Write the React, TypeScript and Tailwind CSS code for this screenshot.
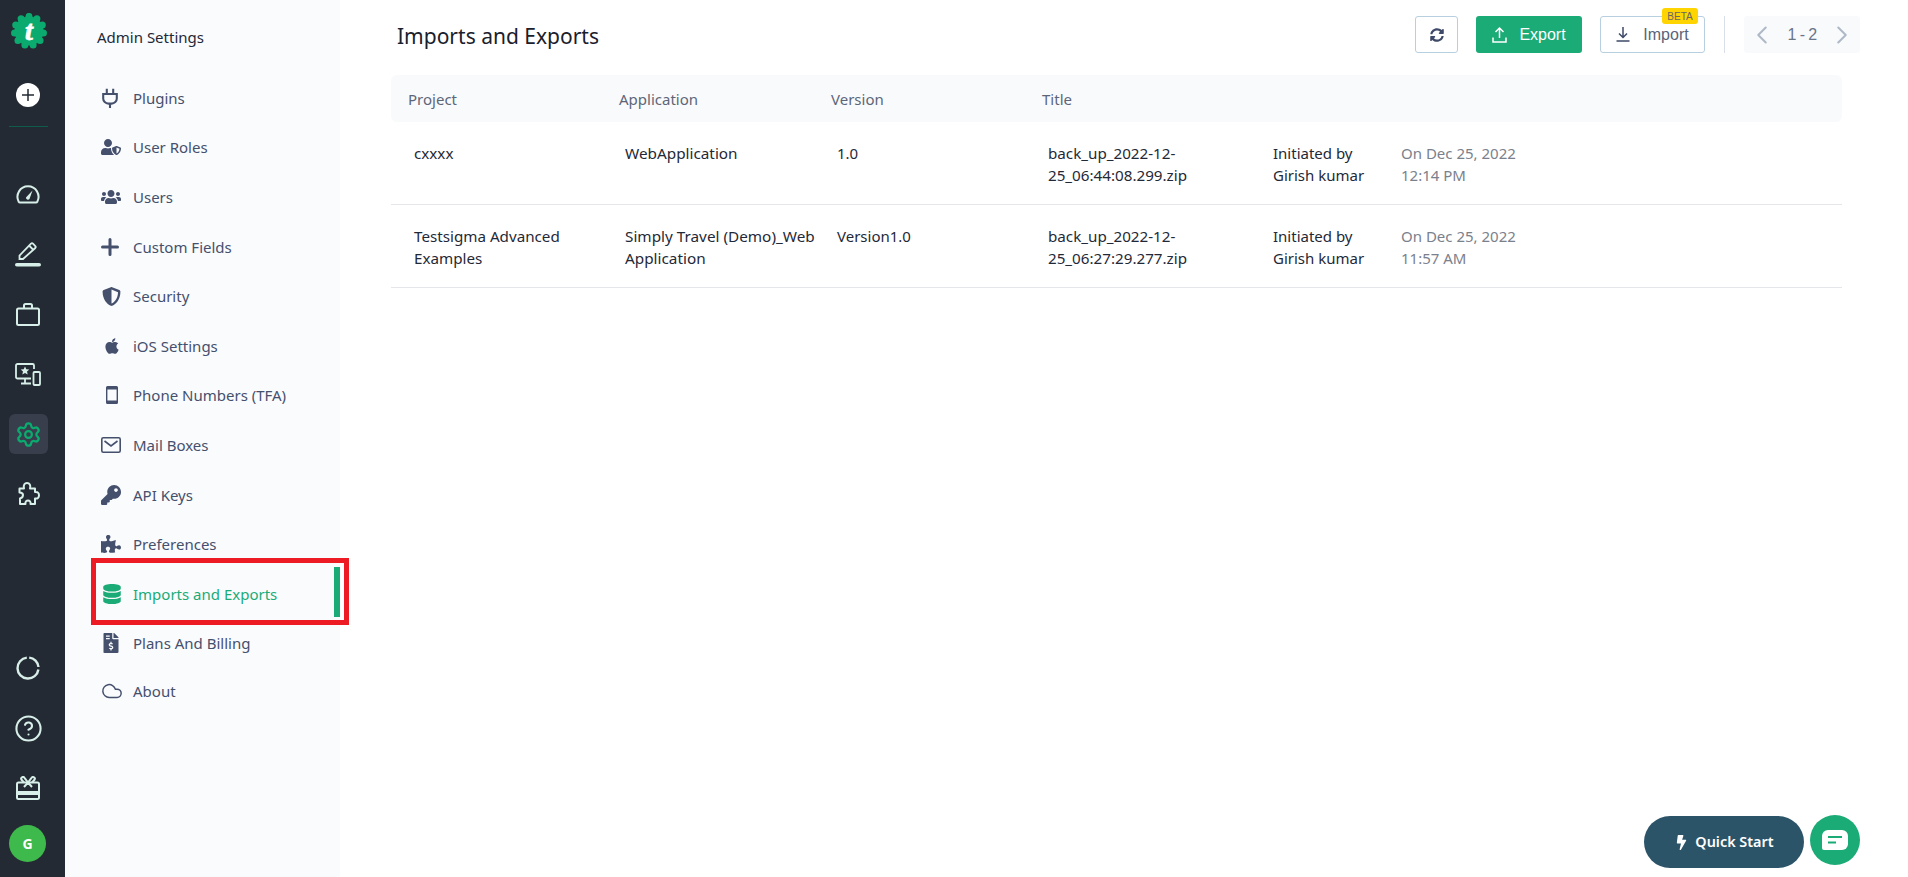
import React from 'react';
import { Settings, CircleHelp, ChevronLeft, ChevronRight, Cloud } from 'lucide-react';
import { FaUserShield, FaUsers, FaShieldAlt, FaApple, FaKey, FaPuzzlePiece, FaDatabase, FaFileInvoiceDollar, FaSyncAlt, FaBolt } from 'react-icons/fa';

function Logo() {
    const dots = Array.from({ length: 11 }, (_, i) => (i * 360) / 11 - 90);
    return (
        <svg width="36" height="36" viewBox="0 0 36 36">
            <circle cx="18" cy="18" r="14.5" fill="#0bab6f" />
            {dots.map((a) => (
                <circle key={a} cx={18 + 14.6 * Math.cos((a * Math.PI) / 180)} cy={18 + 14.6 * Math.sin((a * Math.PI) / 180)} r="3.5" fill="#0bab6f" />
            ))}
            <text x="18" y="27" textAnchor="middle" fontSize="28" fontWeight="700" fontStyle="italic" fontFamily="Liberation Serif, serif" fill="#fff" stroke="#fff" strokeWidth="0.8">t</text>
        </svg>
    );
}

function PlugIcon() {
    return (
        <svg width="18" height="20" viewBox="2 0 20 25" fill="none" stroke="currentColor" strokeWidth="2.6">
            <path d="M8 1v6M16 1v6M3.500 7.500h17v5.500a6.500 6.500 0 0 1-6.500 6.500h-4A6.500 6.500 0 0 1 3.500 13zM12 19.500V25" />
        </svg>
    );
}

function PlusIcon() {
    return (
        <svg width="18" height="18" viewBox="0 0 18 18" fill="none" stroke="currentColor" strokeWidth="3" strokeLinecap="round">
            <path d="M9 1.500v15M1.500 9h15" />
        </svg>
    );
}

function PhoneIcon() {
    return (
        <svg width="12" height="18" viewBox="0 0 12 18" className="ml-[5px]">
            <path fill="currentColor" fillRule="evenodd" d="M1.500 0h9A1.500 1.500 0 0 1 12 1.500v15a1.500 1.500 0 0 1-1.500 1.500h-9A1.500 1.500 0 0 1 0 16.500v-15A1.500 1.500 0 0 1 1.500 0zM1.400 3.500v11h9.200v-11z" />
        </svg>
    );
}

function MailIcon() {
    return (
        <svg width="20" height="16" viewBox="0 0 20 16" fill="none" stroke="currentColor" strokeWidth="1.600">
            <rect x="0.800" y="0.800" width="18.400" height="14.400" rx="1.500" />
            <path d="M3.500 4l6.500 5 6.500-5" />
        </svg>
    );
}

function GaugeIcon() {
    return (
        <svg width="24" height="20" viewBox="0 0 24 20" fill="none" stroke="currentColor" strokeWidth="2">
            <path d="M4 18.500h16a1.500 1.500 0 0 0 1.300-.8A10.500 10.500 0 1 0 2.700 17.700a1.500 1.500 0 0 0 1.300.8z" />
            <path d="M10 13.500l6.500-7-3 8.500a2 2 0 0 1-3.500-1.500z" fill="currentColor" stroke="none" />
        </svg>
    );
}

function PencilIcon() {
    return (
        <svg width="26" height="26" viewBox="0 0 26 26" fill="none" stroke="currentColor" strokeWidth="1.800">
            <path d="M4.500 18v-3.500L16 2.700a1.500 1.500 0 0 1 2 0l2.300 2.300a1.500 1.500 0 0 1 0 2L8 18z" />
            <path d="M14 4.500l4.500 4.500" />
            <rect x="0" y="22" width="26" height="3.600" rx="1.800" fill="currentColor" stroke="none" />
        </svg>
    );
}

function BriefcaseIcon() {
    return (
        <svg width="24" height="23" viewBox="0 0 24 23" fill="none" stroke="currentColor" strokeWidth="2">
            <rect x="1" y="5.500" width="22" height="16.500" rx="1.500" />
            <path d="M8 5.500V2.500A1.500 1.500 0 0 1 9.500 1h5A1.500 1.500 0 0 1 16 2.500v3" />
        </svg>
    );
}

function DevicesIcon() {
    return (
        <svg width="26" height="23" viewBox="0 0 26 23" fill="none" stroke="currentColor" strokeWidth="1.800">
            <path d="M16 15.500H2.500A1.500 1.500 0 0 1 1 14V2.500A1.500 1.500 0 0 1 2.500 1h15A1.500 1.500 0 0 1 19 2.500V6" />
            <path d="M10 15.500V20M6 20.500h10" />
            <rect x="18.500" y="9" width="6.500" height="13" rx="1" />
            <path d="M10 3.500l1.300 2.800 3 .3-2.300 2 .7 3L10 10.100 7.300 11.600l.7-3-2.300-2 3-.3z" fill="currentColor" stroke="none" />
        </svg>
    );
}

function PuzzleIcon() {
    return (
        <svg width="24" height="24" viewBox="0 0 24 24" fill="none" stroke="currentColor" strokeWidth="2" strokeLinejoin="round">
            <path d="M3.500 6.500L8 6.500C7 2.500 9 1 11 1C13.500 1 15 3 14 6.500L19 6.500L19 10C22.500 9.500 23 12 23 13.500C23 15.500 21.500 17 19 16.500L19 22L14.500 22C15 19.500 13.500 18.500 12 18.500C10.500 18.500 9 19.500 9.500 22L4 22L4 16.500C6 16 7 14.500 7 13C7 11.500 5.500 10.500 3.500 10.500Z" />
        </svg>
    );
}

function LoaderIcon() {
    return (
        <svg width="24" height="24" viewBox="0 0 24 24" fill="none" stroke="currentColor" strokeWidth="2.400">
            <path d="M13.200 1.600A10.500 10.500 0 0 1 22.500 11" />
            <path d="M22.400 13.500A10.500 10.500 0 1 1 10.800 1.600" />
        </svg>
    );
}

function GiftIcon() {
    return (
        <svg width="24" height="24" viewBox="0 0 24 24" fill="none" stroke="currentColor" strokeWidth="2">
            <rect x="1" y="6.500" width="22" height="16.500" rx="1.500" />
            <path d="M12 6.500L8.500 1.800a1.800 1.800 0 0 0-3 2L8 6.500M12 6.500l3.500-4.700a1.800 1.800 0 0 1 3 2L16 6.500M12 6.500L8 11M12 6.500l4 4.500" />
            <rect x="1" y="15" width="22" height="4" fill="currentColor" stroke="none" />
        </svg>
    );
}

function UploadIcon() {
    return (
        <svg width="15" height="16" viewBox="0 0 15 16" fill="none" stroke="currentColor" strokeWidth="1.500">
            <path d="M7.500 11V1.500M3.500 5l4-4 4 4M1 10.500v4.500h13v-4.500" />
        </svg>
    );
}

function DownloadIcon() {
    return (
        <svg width="14" height="15" viewBox="0 0 14 15" fill="none" stroke="currentColor" strokeWidth="1.500">
            <path d="M7 0v10M3 6.500l4 4 4-4M0.500 14h13" />
        </svg>
    );
}

function ChatIcon() {
    return (
        <svg width="26" height="21" viewBox="0 0 26 21">
            <path fill="#fff" d="M6 0h14a6 6 0 0 1 6 6v8a6 6 0 0 1-6 6H2a2 2 0 0 1-2-2V6a6 6 0 0 1 6-6z" />
            <path d="M6 7h14M6 12.500h8" stroke="#1bab76" strokeWidth="2" />
        </svg>
    );
}

const menu = [
    { label: 'Plugins', icon: <PlugIcon /> },
    { label: 'User Roles', icon: <FaUserShield size={20} /> },
    { label: 'Users', icon: <FaUsers size={20} /> },
    { label: 'Custom Fields', icon: <PlusIcon /> },
    { label: 'Security', icon: <FaShieldAlt size={19} className="ml-[1px]" /> },
    { label: 'iOS Settings', icon: <FaApple size={18} className="ml-[2px]" /> },
    { label: 'Phone Numbers (TFA)', icon: <PhoneIcon /> },
    { label: 'Mail Boxes', icon: <MailIcon /> },
    { label: 'API Keys', icon: <FaKey size={20} /> },
    { label: 'Preferences', icon: <FaPuzzlePiece size={20} /> },
    { label: 'Imports and Exports', icon: <FaDatabase size={20} className="ml-[1px]" />, active: true },
    { label: 'Plans And Billing', icon: <FaFileInvoiceDollar size={20} /> },
    { label: 'About', icon: <Cloud size={22} strokeWidth={1.600} />, last: true },
];

const rows = [
    { project: 'cxxxx', app: 'WebApplication', version: '1.0', file: 'back_up_2022-12-25_06:44:08.299.zip', time: '12:14 PM' },
    { project: 'Testsigma Advanced Examples', app: 'Simply Travel (Demo)_Web Application', version: 'Version1.0', file: 'back_up_2022-12-25_06:27:29.277.zip', time: '11:57 AM' },
];

function App() {
    return (
        <div className="relative flex h-[877px] w-full overflow-hidden bg-white font-['Noto_Sans',sans-serif] text-[15px]">
            <aside className="flex w-[65px] shrink-0 flex-col items-center bg-[#242a33] pr-[9px] text-[#d7efe8]">
                <div className="ml-[2px] mt-[13px]"><Logo /></div>
                <div className="mt-[34px] flex h-[24px] w-[24px] items-center justify-center rounded-full bg-white">
                    <svg width="12" height="12" viewBox="0 0 12 12" stroke="#242a33" strokeWidth="1.500"><path d="M6 0v12M0 6h12" /></svg>
                </div>
                <div className="mt-[19px] h-px w-[39px] bg-[#0f5c4a]" />
                <div className="mt-[37px] flex w-full flex-col items-center">
                    <div className="flex h-[60px] items-center"><GaugeIcon /></div>
                    <div className="flex h-[60px] items-center"><PencilIcon /></div>
                    <div className="flex h-[60px] items-center"><BriefcaseIcon /></div>
                    <div className="flex h-[60px] items-center"><DevicesIcon /></div>
                    <div className="flex h-[60px] items-center">
                        <div className="flex h-[40px] w-[39px] items-center justify-center rounded-md bg-[#383e4c] text-[#0bab6f]"><Settings size={27} strokeWidth={2} /></div>
                    </div>
                    <div className="flex h-[60px] items-center"><PuzzleIcon /></div>
                </div>
                <div className="mt-auto flex w-full flex-col items-center pb-[15px]">
                    <div className="flex h-[60px] items-center"><LoaderIcon /></div>
                    <div className="flex h-[60px] items-center"><CircleHelp size={29} strokeWidth={1.700} /></div>
                    <div className="flex h-[60px] items-center"><GiftIcon /></div>
                    <div className="-ml-px mt-[7px] flex h-[37px] w-[37px] items-center justify-center rounded-full bg-[#3eb94c] text-[14px] font-bold text-white">G</div>
                </div>
            </aside>

            <nav className="w-[275px] shrink-0 bg-[#fafbfd]">
                <div className="flex h-[73px] items-start pl-[32px] pt-[26px] text-[15px] leading-[22px] text-[#1f2937]">Admin Settings</div>
                {menu.map((item) => (
                    <div key={item.label} className={`relative flex h-[49.6px] items-center pl-[36px] ${item.active ? 'text-[#1bab76]' : 'text-[#45506d]'} ${item.last ? '-mt-[2px]' : ''}`}>
                        <span className="flex w-[32px] shrink-0 items-center">{item.icon}</span>
                        <span className="leading-[20px]">{item.label}</span>
                        {item.active && <span className="absolute right-0 top-[-2px] h-[50px] w-[6px] bg-[#1bab76]" />}
                    </div>
                ))}
            </nav>

            <main className="min-w-0 flex-1 pl-[51px] pr-[66px]">
                <div className="-mr-[18px] ml-[6px] flex h-[75px] items-start justify-between pt-[16px]">
                    <h1 className="-mt-[2px] text-[21px] font-normal leading-[44px] text-[#1a202c]">Imports and Exports</h1>
                    <div className="flex items-center font-['Liberation_Sans',sans-serif] text-[16px]">
                        <button className="flex h-[37px] w-[43px] items-center justify-center rounded-[3px] border border-[#b8cfdf] text-[#3f4a68]"><FaSyncAlt size={14} /></button>
                        <button className="ml-[18px] flex h-[37px] w-[106px] items-center justify-center gap-[12px] rounded-[3px] bg-[#1bab76] text-white"><UploadIcon />Export</button>
                        <button className="relative ml-[18px] flex h-[37px] w-[105px] items-center justify-center gap-[13px] rounded-[3px] border border-[#b8cfdf] text-[#5a6479]">
                            <span className="text-[#3f4a68]"><DownloadIcon /></span>Import
                            <span className="absolute -top-[9px] right-[6px] flex h-[16px] w-[36px] items-center justify-center rounded-[3px] bg-[#ffd400] text-[10px] text-[#666]">BETA</span>
                        </button>
                        <div className="ml-[19px] h-[37px] w-px bg-[#d8dfe8]" />
                        <div className="ml-[19px] flex h-[37px] w-[116px] items-center justify-between rounded-[3px] bg-[#f9fafc] px-[3px] text-[#6b7588]">
                            <ChevronLeft size={30} strokeWidth={1.600} className="text-[#aeb8c6]" />
                            <span className="tracking-[-0.6px]">1 - 2</span>
                            <ChevronRight size={30} strokeWidth={1.600} className="text-[#aeb8c6]" />
                        </div>
                    </div>
                </div>

                <div className="grid h-[47px] grid-cols-[211px_212px_211px_1fr] items-center rounded-md bg-[#f9fafc] pl-[17px] pt-[2px] text-[#5d6678]">
                    <span>Project</span>
                    <span>Application</span>
                    <span>Version</span>
                    <span>Title</span>
                </div>
                {rows.map((row) => (
                    <div key={row.file} className="grid grid-cols-[211px_212px_211px_225px_128px_1fr] border-b border-[#e4e6ea] pb-[18px] pt-[20px] text-[15.2px] leading-[22px] text-[#1f2937]">
                        <div className="pl-[23px] pr-[10px]">{row.project}</div>
                        <div className="-mr-[8px] pl-[23px] text-[15.3px]">{row.app}</div>
                        <div className="pl-[23px] text-[15px]">{row.version}</div>
                        <div className="pl-[23px] pr-[20px]">{row.file}</div>
                        <div className="pl-[23px] text-[15px]">Initiated by Girish kumar</div>
                        <div className="pl-[23px] text-[15px] text-[#7b818c]">
                            <div>On Dec 25, 2022</div>
                            <div>{row.time}</div>
                        </div>
                    </div>
                ))}
            </main>

            <div className="pointer-events-none absolute left-[91px] top-[558px] h-[67px] w-[258px] border-[5px] border-[#ed1c24]" />

            <button className="absolute left-[1644px] top-[816px] flex h-[52px] w-[160px] items-center justify-center gap-[6px] rounded-full bg-[#2c5469] text-[14.4px] font-semibold text-white">
                <FaBolt size={15} />Quick Start
            </button>
            <button className="absolute left-[1810px] top-[815px] flex h-[50px] w-[50px] items-center justify-center rounded-full bg-[#1bab76]"><ChatIcon /></button>
        </div>
    );
}

export default App;
